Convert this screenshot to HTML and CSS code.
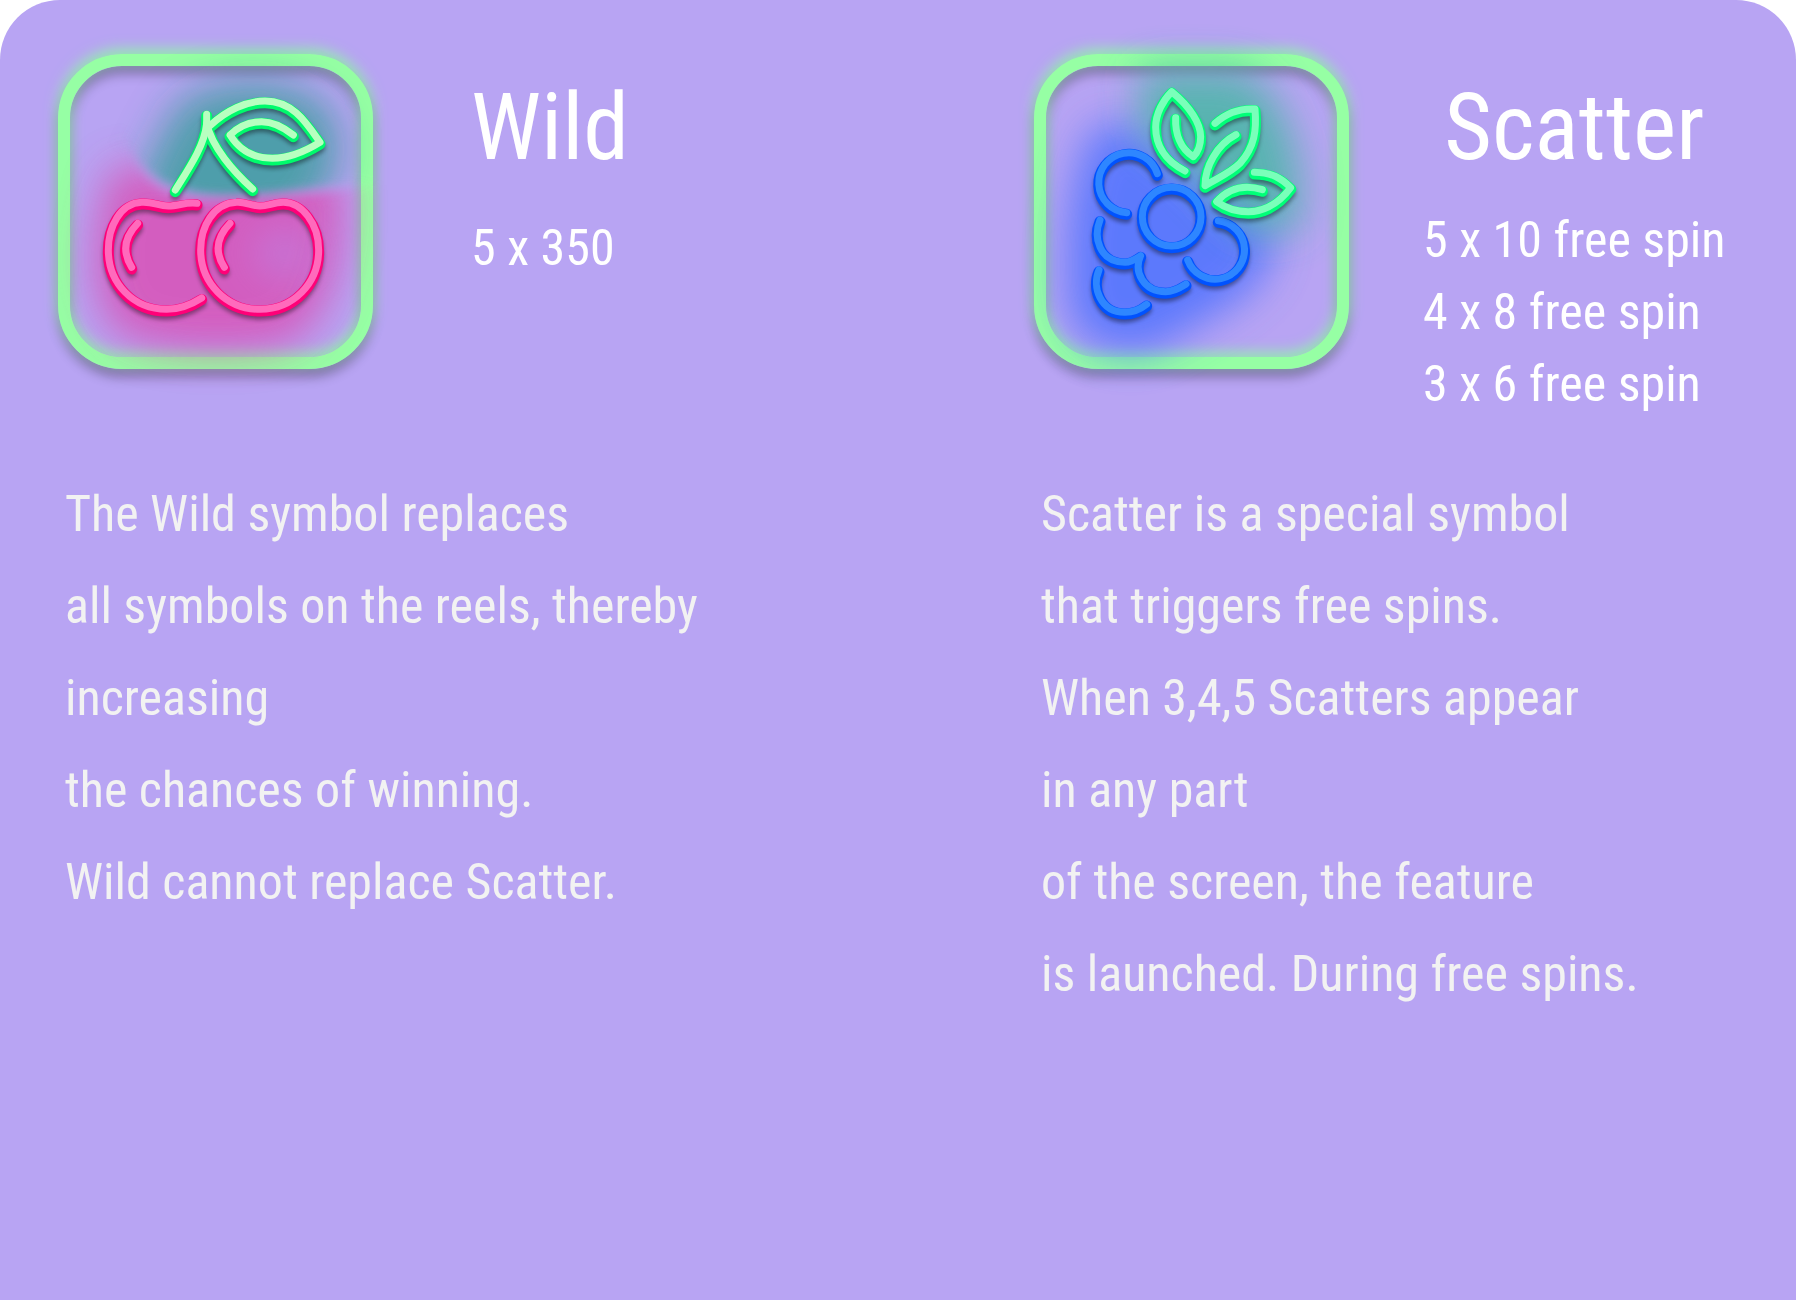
FILE: index.html
```html
<!DOCTYPE html>
<html lang="en">
<head>
<meta charset="utf-8">
<meta name="viewport" content="width=device-width, initial-scale=1">
<title>Wild and Scatter</title>
<link rel="stylesheet" href="styles.css">
</head>
<body>
<main class="panel">
  <article class="symbol symbol--wild">
    <header class="symbol__head">
      <div class="badge">
        <svg class="badge__art" viewBox="120 138 873 873" role="img" aria-label="Cherries">
          <defs>
            <filter id="soft" x="-50%" y="-50%" width="200%" height="200%"><feGaussianBlur stdDeviation="62"/></filter>
            <filter id="wave" x="-20%" y="-20%" width="140%" height="140%"><feGaussianBlur stdDeviation="18"/></filter>
            <filter id="drop" x="-20%" y="-20%" width="140%" height="140%"><feGaussianBlur stdDeviation="6"/></filter>
            <mask id="above" maskUnits="userSpaceOnUse" x="0" y="0" width="1110" height="1140">
              <path fill="#fff" filter="url(#wave)" d="M-100 -100H1300V470C1000 470 800 532 600 530C470 530 350 490 290 380L-100 300Z"/>
            </mask>
            <mask id="below" maskUnits="userSpaceOnUse" x="0" y="0" width="1110" height="1140">
              <path fill="#fff" filter="url(#wave)" d="M-100 1300H1300V480C1000 490 800 530 600 535C470 540 370 530 310 400L250 200H-100Z"/>
            </mask>
            <g id="cherry-stem">
              <path d="M530 283V310C524 375 480 440 436 510"/>
              <path d="M530 310C545 380 610 455 668 507"/>
              <path d="M540 317C590 270 650 243 705 243C790 243 830 310 870 367C820 398 770 415 727 415C665 415 625 385 600 345C630 315 660 305 695 305C735 305 765 325 790 345"/>
            </g>
            <g id="cherry-fruit">
              <path d="M501 550C470 545 445 558 415 558C385 558 370 545 335 547C270 550 235 620 235 690C235 790 310 868 410 868C455 868 490 850 515 834"/>
              <path d="M323 610C279 655 279 700 305 742"/>
              <path d="M690 558C665 558 645 545 620 547C550 550 512 620 512 690C512 790 590 868 690 868C790 868 866 790 866 690C866 610 815 547 760 547C730 547 715 558 690 558Z"/>
              <path d="M600 610C556 655 556 700 583 742"/>
            </g>
          </defs>
          <g mask="url(#above)">
            <path class="glow glow--teal" d="M450 250C560 170 820 160 900 280C970 400 900 600 700 660H360C260 560 380 380 450 250Z"/>
          </g>
          <g mask="url(#below)">
            <path class="glow glow--pink" d="M250 440H930C960 650 920 880 780 970C640 1000 420 1000 280 950C160 850 180 620 250 440Z"/>
          </g>
          <ellipse class="glow glow--lilac" cx="765" cy="700" rx="90" ry="70"/>
          <g class="neon neon--leaf">
            <use class="neon__shadow" href="#cherry-stem" y="16"/>
            <use class="neon__edge" href="#cherry-stem" y="5"/>
            <use class="neon__core" href="#cherry-stem"/>
          </g>
          <g class="neon neon--cherry">
            <use class="neon__shadow" href="#cherry-fruit" y="16"/>
            <use class="neon__edge" href="#cherry-fruit" y="5"/>
            <use class="neon__core" href="#cherry-fruit"/>
          </g>
        </svg>
      </div>
      <div class="symbol__info">
        <h2 class="symbol__name">Wild</h2>
        <ul class="payouts">
          <li>5 x 350</li>
        </ul>
      </div>
    </header>
    <p class="symbol__text">The Wild symbol replaces<br>all symbols on the reels, thereby<br>increasing<br>the chances of winning.<br>Wild cannot replace Scatter.</p>
  </article>

  <article class="symbol symbol--scatter">
    <header class="symbol__head">
      <div class="badge">
        <svg class="badge__art" viewBox="108 138 873 873" role="img" aria-label="Blackberry">
          <defs>
            <g id="berry-leaves">
              <path d="M525 453C460 420 437 370 437 322C437 280 460 240 485 215C540 260 572 310 572 350C572 375 565 395 550 410C510 385 495 340 497 293"/>
              <path d="M615 310C650 278 695 265 735 267C740 330 735 380 690 430C660 460 620 475 585 497C585 440 620 375 678 344"/>
              <path d="M733 457C785 457 815 475 842 503C800 560 750 575 715 575C675 575 640 560 620 545C660 500 710 495 757 509"/>
            </g>
            <g id="berry-fruit">
              <path d="M442 461A90 90 0 1 0 350 578"/>
              <circle cx="485" cy="590" r="88"/>
              <path d="M270 600C250 650 265 725 345 727C365 727 380 715 392 707C370 755 400 815 467 815C495 815 515 800 528 792"/>
              <path d="M267 750C245 800 270 877 345 877C375 877 395 865 410 853"/>
              <path d="M625 602A88 88 0 1 1 533 720"/>
            </g>
          </defs>
          <path class="glow glow--blue" d="M250 330C320 280 430 330 530 430L780 610C820 740 720 830 600 890L450 980C330 1020 180 980 175 850C160 680 180 460 250 330Z"/>
          <path class="glow glow--mint" d="M390 150H700C820 220 890 400 870 630H700L560 470L390 330Z"/>
          <g class="neon neon--berry">
            <use class="neon__shadow" href="#berry-fruit" y="16"/>
            <use class="neon__edge" href="#berry-fruit" y="5"/>
            <use class="neon__core" href="#berry-fruit"/>
          </g>
          <g class="neon neon--mint">
            <use class="neon__shadow" href="#berry-leaves" y="16"/>
            <use class="neon__edge" href="#berry-leaves" y="5"/>
            <use class="neon__core" href="#berry-leaves"/>
          </g>
        </svg>
      </div>
      <div class="symbol__info">
        <h2 class="symbol__name">Scatter</h2>
        <ul class="payouts">
          <li>5 x 10 free spin</li>
          <li>4 x 8 free spin</li>
          <li>3 x 6 free spin</li>
        </ul>
      </div>
    </header>
    <p class="symbol__text">Scatter is a special symbol<br>that triggers free spins.<br>When 3,4,5 Scatters appear<br>in any part<br>of the screen, the feature<br>is launched. During free spins.</p>
  </article>
</main>
</body>
</html>
```

FILE: styles.css
```css
* {
  box-sizing: border-box;
}

body {
  margin: 0;
  background: #fff;
  font-family: "Roboto Condensed", Roboto, sans-serif;
  font-weight: 400;
}

.panel {
  display: grid;
  grid-template-columns: 1fr 1fr;
  grid-template-rows: auto 1fr;
  column-gap: 272px;
  row-gap: 48px;
  min-height: 100vh;
  padding: 54px 58px;
  border-radius: 60px 60px 0 0;
  background: #b8a4f3;
  color: #fff;
}

.symbol {
  display: grid;
  grid-row: span 2;
  grid-template-rows: subgrid;
  min-width: 0;
}

.symbol__head {
  display: flex;
  align-items: flex-start;
  gap: 74px;
}

.symbol--wild .symbol__head {
  gap: 98px;
}

.symbol__info {
  padding-top: 26px;
  white-space: nowrap;
}

.symbol__name {
  margin: 0 0 28px;
  font-size: 92px;
  font-weight: 400;
  line-height: 96px;
  text-align: center;
}

.symbol--wild .symbol__name {
  margin-bottom: 36px;
}

.payouts {
  margin: 0;
  padding: 0;
  list-style: none;
  font-size: 50px;
  line-height: 72px;
}

.symbol__text {
  margin: 0;
  padding-left: 7px;
  color: #f2f2f2;
  font-size: 50px;
  line-height: 92px;
  white-space: nowrap;
}

.badge {
  flex: none;
  width: 315px;
  height: 315px;
  border: 12px solid #96ffa4;
  border-radius: 64px;
  box-shadow:
    0 -5px 14px rgba(140, 255, 160, 0.8),
    0 8px 12px rgba(0, 0, 0, 0.3),
    inset 0 -5px 14px rgba(140, 255, 160, 0.8),
    inset 0 8px 12px rgba(0, 0, 0, 0.3);
}

.badge__art {
  display: block;
  width: 100%;
  height: 100%;
  overflow: visible;
}

.glow {
  filter: url(#soft);
}

.glow--teal {
  fill: #249c8c;
  opacity: 0.7;
}

.glow--pink {
  fill: #dc48b0;
  opacity: 0.78;
}

.glow--lilac {
  fill: #c080e0;
  opacity: 0.8;
}

.glow--mint {
  fill: #40b8a0;
  opacity: 0.8;
}

.glow--blue {
  fill: #4a70ff;
  opacity: 0.82;
}

.neon {
  fill: none;
  stroke-linecap: round;
  stroke-linejoin: round;
}

.neon__shadow {
  stroke: #000;
  stroke-width: 30px;
  opacity: 0.4;
  filter: url(#drop);
}

.neon__edge {
  stroke: var(--edge);
  stroke-width: 33px;
}

.neon__core {
  stroke: var(--core);
  stroke-width: 21px;
}

.neon--leaf {
  --edge: #00fa6c;
  --core: #b8ffc0;
}

.neon--cherry {
  --edge: #ff0078;
  --core: #ff6abc;
}

.neon--berry {
  --edge: #0052ff;
  --core: #2e86ff;
}

.neon--mint {
  --edge: #00ff78;
  --core: #7affba;
}
```
